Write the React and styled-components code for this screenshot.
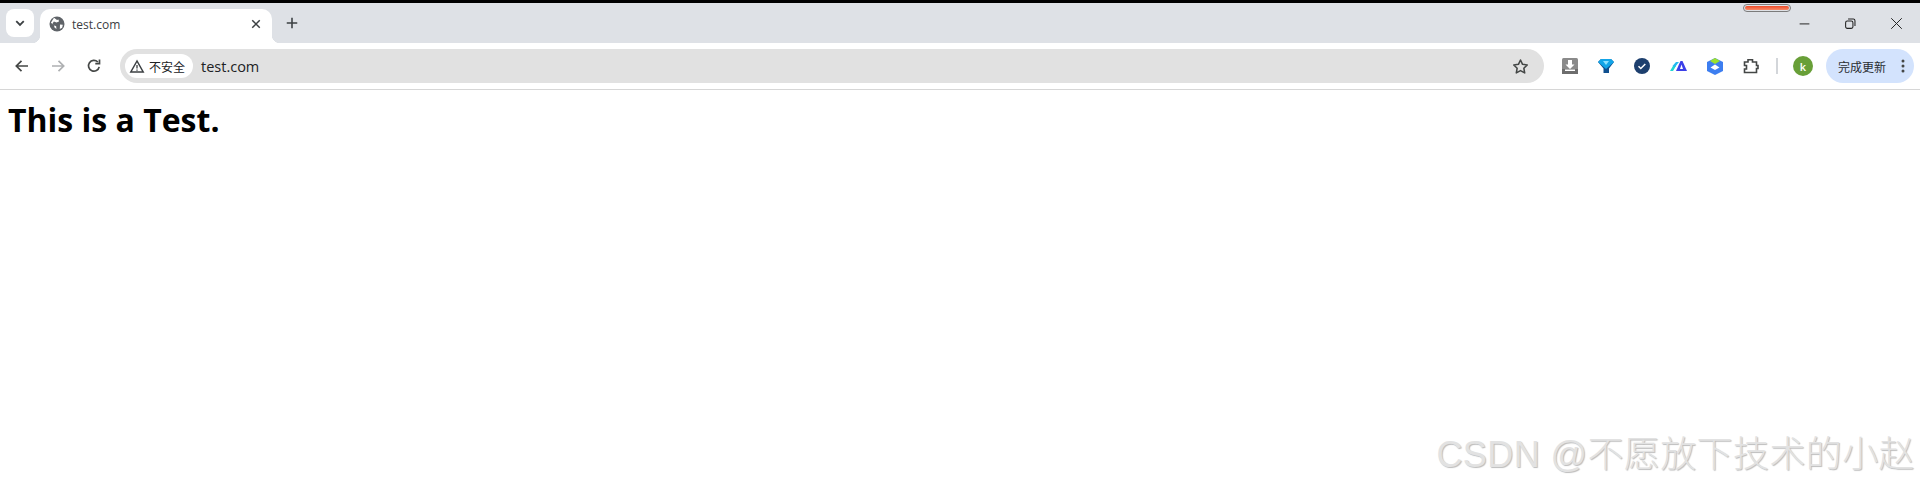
import React from 'react'
import styled, { createGlobalStyle } from 'styled-components'

const Global = createGlobalStyle`
    html, body {
        margin: 0;
        padding: 0;
        background: #fff;
    }
    body {
        font-family: "Open Sans", "Noto Sans CJK SC", sans-serif;
    }
`

const Page = styled.div`
    position: relative;
    width: 1920px;
    height: 487px;
    overflow: hidden;
    background: #fff;
    border-top: 3px solid #000;
    box-sizing: border-box;
`

const TabStrip = styled.div`
    position: relative;
    display: flex;
    align-items: flex-end;
    height: 40px;
    padding-left: 6px;
    background: #dee1e6;
`

const TabListButton = styled.div`
    display: flex;
    align-items: center;
    justify-content: center;
    align-self: flex-start;
    width: 28px;
    height: 28px;
    margin-top: 6px;
    background: #fff;
    border-radius: 8px;
    color: #3c4043;
`

const Tab = styled.div`
    position: relative;
    display: flex;
    align-items: center;
    width: 232px;
    height: 34px;
    margin-left: 6px;
    padding: 0 10px 4px 9px;
    box-sizing: border-box;
    background: #fff;
    border-radius: 10px 10px 0 0;
    &::before, &::after {
        content: "";
        position: absolute;
        bottom: 0;
        width: 8px;
        height: 8px;
    }
    &::before {
        left: -8px;
        background: radial-gradient(circle at 0 0, transparent 8px, #fff 8.5px);
    }
    &::after {
        right: -8px;
        background: radial-gradient(circle at 100% 0, transparent 8px, #fff 8.5px);
    }
`

const TabTitle = styled.span`
    flex: 1;
    margin-left: 7px;
    font-family: "Open Sans", sans-serif;
    font-size: 12px;
    color: #3c4043;
`

const NewTab = styled.div`
    display: flex;
    align-items: center;
    align-self: flex-start;
    height: 16px;
    margin: 12px 0 0 13px;
    color: #3c4043;
`

const WindowControls = styled.div`
    display: flex;
    align-self: flex-start;
    margin-left: auto;
    margin-top: 14px;
    padding-right: 17px;
    gap: 33px;
    color: #222;
`

const BatteryPill = styled.div`
    position: absolute;
    top: 1px;
    left: 1743px;
    width: 44px;
    height: 4px;
    padding: 1px;
    border: 1.5px solid #7b7b7b;
    border-radius: 5px;
    background: linear-gradient(#ee4a28, #f58a68) content-box;
`

const Toolbar = styled.div`
    display: flex;
    align-items: center;
    height: 47px;
    padding: 0 6px 0 0;
    box-sizing: border-box;
    background: #fff;
    border-bottom: 1px solid #d6d6d6;
`

const NavGroup = styled.div`
    display: flex;
    align-items: center;
    flex-shrink: 0;
    gap: 20px;
    padding-left: 14px;
    width: 120px;
    box-sizing: border-box;
`

const AddressBar = styled.div`
    display: flex;
    align-items: center;
    flex-shrink: 0;
    width: 1424px;
    height: 34px;
    padding: 0 15px 0 5px;
    box-sizing: border-box;
    background: #e1e1e1;
    border-radius: 17px;
`

const SecurityChip = styled.div`
    display: flex;
    align-items: center;
    gap: 4px;
    width: 68px;
    height: 24px;
    padding-left: 4px;
    box-sizing: border-box;
    background: #fff;
    border-radius: 12px;
    font-family: "Noto Sans CJK SC", sans-serif;
    font-size: 12px;
    color: #202124;
`

const Url = styled.span`
    flex: 1;
    margin-left: 8px;
    font-family: "Open Sans", sans-serif;
    font-size: 14.5px;
    color: #202124;
`

const Extensions = styled.div`
    display: flex;
    align-items: center;
    flex-shrink: 0;
    gap: 20px;
    margin-left: 18px;
`

const Separator = styled.div`
    flex-shrink: 0;
    width: 2px;
    height: 16px;
    margin: 0 15px 0 17px;
    background: #d3d6da;
`

const Avatar = styled.div`
    display: flex;
    align-items: center;
    justify-content: center;
    flex-shrink: 0;
    width: 20px;
    height: 20px;
    margin-right: 13px;
    border-radius: 50%;
    background: #689f38;
    color: #fff;
    font-family: "Open Sans", sans-serif;
    font-size: 11px;
    font-weight: 600;
`

const UpdatePill = styled.div`
    display: flex;
    align-items: center;
    justify-content: space-between;
    flex-shrink: 0;
    width: 88px;
    height: 34px;
    padding: 0 9px 0 12px;
    box-sizing: border-box;
    border-radius: 17px;
    background: #d3e3fd;
    font-family: "Noto Sans CJK SC", sans-serif;
    font-size: 12px;
    color: #2a2d31;
`

const Heading = styled.h1`
    margin: 0;
    padding: 8px 0 0 8px;
    font-family: "Open Sans", sans-serif;
    font-size: 32px;
    line-height: 44px;
    font-weight: 700;
    color: #000;
`

const Watermark = styled.div`
    position: absolute;
    right: 5px;
    bottom: 10px;
    font-family: "Liberation Sans", "Noto Sans CJK SC", sans-serif;
    font-size: 36px;
    line-height: 44px;
    font-weight: 300;
    letter-spacing: 0.4px;
    color: #e2e2e2;
    text-shadow: 1px 1px 1px #bcbcbc;
`

const Stroke = ({ size = 16, color = 'currentColor', width = 2, children }) => (
    <svg width={size} height={size} viewBox="0 0 16 16" fill="none" stroke={color} strokeWidth={width}>
        {children}
    </svg>
)

function App() {
    return (
        <Page>
            <Global />
            <TabStrip>
                <TabListButton>
                    <Stroke size={12} width={2.4}><path d="M3 5.500l5 5 5-5" /></Stroke>
                </TabListButton>
                <Tab>
                    <svg width="16" height="16" viewBox="0 0 16 16">
                        <circle cx="8" cy="8" r="7.500" fill="#5f6368" />
                        <path d="M5 1.800l3 2.200 1.500-.6.5 2-2.500 1-2.600-.8-1.400 1.800 2 2.400 1.600.2.400 3-2-1.500-.6-2.600-3-2.200zM11 8.500l2.800.2-.6 3-2.400 1.400z" fill="#fff" />
                    </svg>
                    <TabTitle>test.com</TabTitle>
                    <Stroke size={12} color="#3c4043" width={2}><path d="M3 3l10 10M13 3L3 13" /></Stroke>
                </Tab>
                <NewTab>
                    <Stroke size={14} width={1.8}><path d="M8 2v12M2 8h12" /></Stroke>
                </NewTab>
                <WindowControls>
                    <Stroke size={13} width={1.2}><path d="M2 8.500h12" /></Stroke>
                    <Stroke size={13} width={1.3}><rect x="2" y="5" width="9" height="9" rx="2" /><path d="M5 2.500h6.500a2 2 0 0 1 2 2V11" /></Stroke>
                    <Stroke size={13} width={1.2}><path d="M1.500 1.500l13 13M14.500 1.500l-13 13" /></Stroke>
                </WindowControls>
                <BatteryPill />
            </TabStrip>
            <Toolbar>
                <NavGroup>
                    <Stroke size={16} color="#444746" width={1.7}><path d="M14 8H2.500M7.500 2.800L2.300 8l5.200 5.200" /></Stroke>
                    <Stroke size={16} color="#aeb0b2" width={1.7}><path d="M2 8h11.500M8.500 2.800L13.700 8l-5.200 5.200" /></Stroke>
                    <Stroke size={16} color="#444746" width={1.7}><path d="M13.200 8.800A5.400 5.400 0 1 1 11.800 4M13.500 1.500v4.200H9.300" /></Stroke>
                </NavGroup>
                <AddressBar>
                    <SecurityChip>
                        <svg width="16" height="15" viewBox="0 0 16 15" fill="none" stroke="#3c4043" strokeWidth="1.500">
                            <path d="M8 2L1.800 13h12.400z" />
                            <path d="M8 6v3.500M8 10.500v1.300" strokeWidth="1.300" />
                        </svg>
                        不安全
                    </SecurityChip>
                    <Url>test.com</Url>
                    <svg width="17" height="17" viewBox="0 0 24 24" fill="none" stroke="#444746" strokeWidth="2.200" strokeLinejoin="round">
                        <path d="M12 2.800l2.900 6.100 6.600.9-4.800 4.600 1.200 6.600-5.900-3.200-5.900 3.200 1.200-6.600-4.800-4.600 6.600-.9z" />
                    </svg>
                </AddressBar>
                <Extensions>
                    <svg width="16" height="16" viewBox="0 0 16 16">
                        <rect width="16" height="16" rx="1.500" fill="#8a8a8a" />
                        <rect y="11" width="16" height="5" fill="#6d6d6d" />
                        <path d="M6 2h4v4.500h2.500L8 11 3.500 6.500H6z" fill="#fff" />
                        <rect x="3" y="11.500" width="10" height="1.500" fill="#fff" />
                    </svg>
                    <svg width="16" height="16" viewBox="0 0 16 16">
                        <path d="M0 4L3 1h10l3 3-5 6.500V15H5.500v-4.500z" fill="#0f4f8f" />
                        <path d="M3 1h10l3 3-8 7-8-7z" fill="#12a5e8" />
                        <path d="M5 3h6L8 7z" fill="#8be0ff" />
                    </svg>
                    <svg width="16" height="16" viewBox="0 0 16 16">
                        <circle cx="8" cy="8" r="8" fill="#1d3f6e" />
                        <path d="M4.500 8.200l2.300 2.300 4.500-4.500" fill="none" stroke="#fff" strokeWidth="1.500" />
                    </svg>
                    <svg width="17" height="16" viewBox="0 0 17 16">
                        <path d="M0 13l3-5h3l-3 5z" fill="#1fd6d0" />
                        <path d="M2.500 8L6 4h3L5 9z" fill="#22b8f0" />
                        <path d="M6 13l4.500-10h2l4.500 10z" fill="#3b3fe8" />
                        <path d="M10 11l1.500-4.500L13 11z" fill="#fff" />
                    </svg>
                    <svg width="16" height="17" viewBox="0 0 16 17">
                        <path d="M8 0l8 4v9l-8 4-8-4V4z" fill="#3d7ef0" />
                        <path d="M3 3l5-3 5 3-5 3z" fill="#9be22d" />
                        <path d="M3.500 9.500L8 6.500l4.500 3L8 12z" fill="#fff" />
                    </svg>
                    <svg width="16" height="16" viewBox="0 0 16 16" fill="none" stroke="#444746" strokeWidth="1.600">
                        <path d="M1.500 4H5V1.800h4.500V4h4v3.500H15v3h-1.500v4H1.500v-3.500h2v-3.500h-2z" />
                    </svg>
                </Extensions>
                <Separator />
                <Avatar>k</Avatar>
                <UpdatePill>
                    完成更新
                    <svg width="4" height="14" viewBox="0 0 4 14" fill="#444746">
                        <circle cx="2" cy="2" r="1.500" />
                        <circle cx="2" cy="7" r="1.500" />
                        <circle cx="2" cy="12" r="1.500" />
                    </svg>
                </UpdatePill>
            </Toolbar>
            <Heading>This is a Test.</Heading>
            <Watermark>CSDN @不愿放下技术的小赵</Watermark>
        </Page>
    )
}

export default App
